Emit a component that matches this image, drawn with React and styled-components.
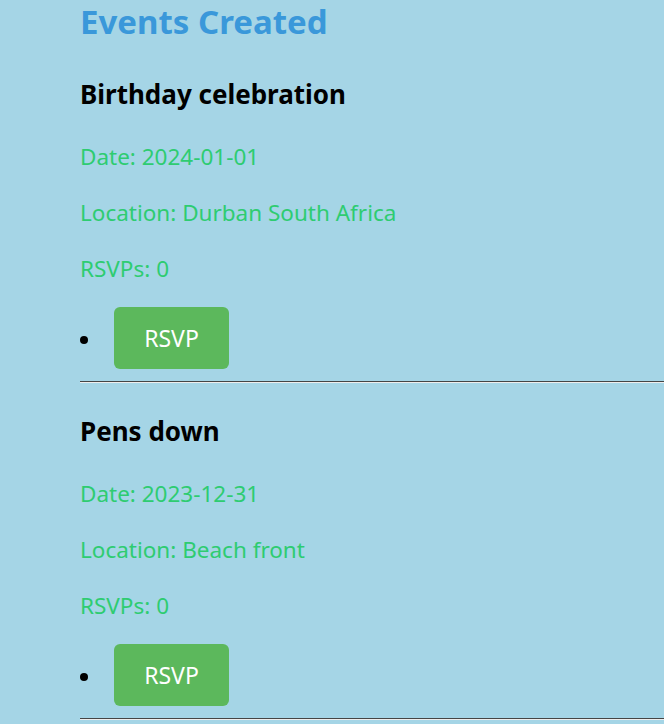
import React from 'react';
import styled, { createGlobalStyle } from 'styled-components';

const GlobalStyle = createGlobalStyle`
  html, body {
    margin: 0;
    padding: 0;
    background: #a5d5e6;
    font-family: "Noto Sans", "Open Sans", sans-serif;
  }
`;

const Page = styled.div`
  padding-left: 80px;
  min-height: 724px;
`;

const Title = styled.h1`
  margin: 0;
  font-size: 33px;
  line-height: 44px;
  font-weight: 700;
  color: #3a98da;
`;

const EventCard = styled.section`
  padding-top: 34px;
`;

const EventName = styled.h2`
  margin: 0 0 33px;
  font-size: 26px;
  line-height: 32px;
  font-weight: 700;
  color: #000;
`;

const Detail = styled.p`
  margin: 0 0 28px;
  font-size: 22.5px;
  line-height: 28px;
  color: #2ecc71;
`;

const Actions = styled.ul`
  margin: -4px 0 12px;
  padding: 0;
  list-style: disc inside;
  font-size: 22px;
`;

const ActionItem = styled.li`
  height: 62px;
  line-height: 64px;

  &::marker {
    font-size: 23px;
  }
`;

const RsvpButton = styled.button`
  margin-left: 2px;
  width: 115px;
  height: 62px;
  border: none;
  border-radius: 6px;
  background: #5cb85c;
  color: #fff;
  font-family: inherit;
  font-size: 23px;
  vertical-align: top;
  cursor: pointer;
`;

const Divider = styled.hr`
  margin: 0 0 -2px;
  border: 1px inset #eee;
  border-top-color: #999;
  border-left: none;
  border-right: none;
`;

const events = [
  { name: 'Birthday celebration', date: '2024-01-01', location: 'Durban South Africa', rsvps: 0 },
  { name: 'Pens down', date: '2023-12-31', location: 'Beach front', rsvps: 0 },
];

export default function App() {
  return (
    <Page>
      <GlobalStyle />
      <Title>Events Created</Title>
      {events.map((ev) => (
        <React.Fragment key={ev.name}>
          <EventCard>
            <EventName>{ev.name}</EventName>
            <Detail>Date: {ev.date}</Detail>
            <Detail>Location: {ev.location}</Detail>
            <Detail>RSVPs: {ev.rsvps}</Detail>
            <Actions>
              <ActionItem>
                <RsvpButton>RSVP</RsvpButton>
              </ActionItem>
            </Actions>
          </EventCard>
          <Divider />
        </React.Fragment>
      ))}
    </Page>
  );
}
